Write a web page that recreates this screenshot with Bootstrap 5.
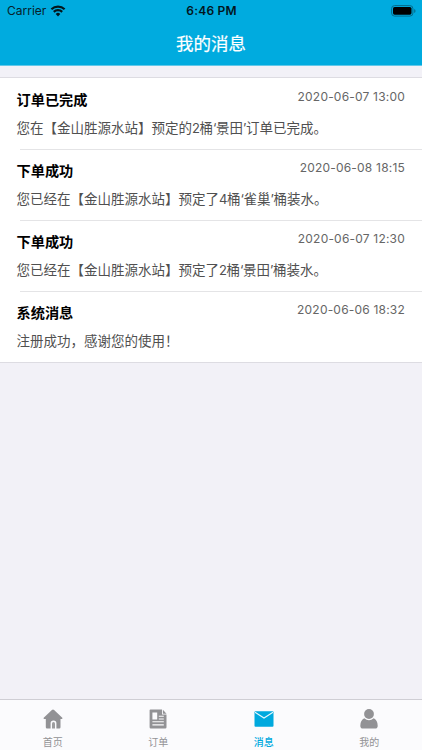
<!DOCTYPE html>
<html lang="zh-CN">
<head>
<meta charset="utf-8">
<meta name="viewport" content="width=device-width, initial-scale=1">
<title>我的消息</title>
<link href="https://cdn.jsdelivr.net/npm/bootstrap@5.3.0/dist/css/bootstrap.min.css" rel="stylesheet">
<style>
body{background:#f2f1f7;font-family:Inter,"Noto Sans CJK SC",sans-serif;height:100vh;overflow:hidden}
.app-header{background:#00abdf;height:66px;border-bottom:1px solid #62c8e9}
.status-bar{height:22px;font-size:12px;line-height:22px;color:#07212b;padding:0 6px 0 7px;letter-spacing:0}
.status-time{font-size:12px;font-weight:600;letter-spacing:.2px;color:#03161d}
.app-title{font-size:17.5px;line-height:43px;font-weight:400;color:#fff;-webkit-text-stroke:.2px #fff}
.messages{margin-top:11px;border-top:1px solid #dddce2;border-bottom:1px solid #dddce2;background:#fff}
.message{height:71.2px;padding:11.4px 17px 0 16.5px;position:relative}
.message:first-child{height:70.5px;padding-top:10.6px}
.message + .message::before{content:"";position:absolute;left:20px;right:0;top:0;height:1px;background:#e4e4e6}
.message-title{font-size:14.2px;line-height:21px;font-weight:700;color:#000}
.message-date{font-size:12px;line-height:15px;color:#666;letter-spacing:.2px}
.message-text{font-size:13.5px;line-height:20px;color:#505050;margin-top:8px}
.latin{font-size:13px;letter-spacing:-.4px}
.tab-bar{height:51px;background:#fbfbfd;border-top:1px solid #cfced4}
.tab-item{color:#929295;font-size:10px;line-height:14px;padding-top:9px;text-decoration:none}
.tab-item.current{color:#00a9de;font-weight:500}
.tab-item svg{margin-bottom:6px}
</style>
</head>
<body class="d-flex flex-column">
<header class="app-header flex-shrink-0">
  <div class="status-bar row g-0 align-items-center">
    <div class="col d-flex align-items-center gap-1">Carrier
      <svg width="16" height="12" viewBox="0 0 15 12" fill="none" stroke="#03161d" stroke-width="2.2"><path d="M.9 4.200a9.500 9.500 0 0 1 13.200 0M3.300 6.900a6 6 0 0 1 8.400 0"/><path d="M7.500 11.400 5.200 8.900a3.300 3.300 0 0 1 4.600 0z" fill="#03161d" stroke="none"/></svg>
    </div>
    <div class="col-auto status-time">6:46 PM</div>
    <div class="col d-flex justify-content-end">
      <svg width="25" height="12" viewBox="0 0 25 12"><rect x=".6" y=".6" width="21.3" height="10.5" rx="3" fill="none" stroke="#046c8b"/><rect x="2" y="2" width="18.5" height="7.7" rx="1.6"/><path d="M23.2 4v4q1.3-.7 1.3-2t-1.3-2" fill="#046c8b"/></svg>
    </div>
  </div>
  <h1 class="app-title text-center mb-0">我的消息</h1>
</header>
<main class="flex-grow-1">
  <div class="messages">
    <article class="message"><div class="d-flex justify-content-between"><h2 class="message-title mb-0">订单已完成</h2><time class="message-date">2020-06-07 13:00</time></div><p class="message-text mb-0">您在【金山胜源水站】预定的<span class="latin">2</span>桶<span class="latin">‘</span>景田<span class="latin">’</span>订单已完成。</p></article>
    <article class="message"><div class="d-flex justify-content-between"><h2 class="message-title mb-0">下单成功</h2><time class="message-date">2020-06-08 18:15</time></div><p class="message-text mb-0">您已经在【金山胜源水站】预定了<span class="latin">4</span>桶<span class="latin">‘</span>雀巢<span class="latin">’</span>桶装水。</p></article>
    <article class="message"><div class="d-flex justify-content-between"><h2 class="message-title mb-0">下单成功</h2><time class="message-date">2020-06-07 12:30</time></div><p class="message-text mb-0">您已经在【金山胜源水站】预定了<span class="latin">2</span>桶<span class="latin">‘</span>景田<span class="latin">’</span>桶装水。</p></article>
    <article class="message"><div class="d-flex justify-content-between"><h2 class="message-title mb-0">系统消息</h2><time class="message-date">2020-06-06 18:32</time></div><p class="message-text mb-0">注册成功，感谢您的使用！</p></article>
  </div>
</main>
<nav class="tab-bar row g-0 flex-shrink-0">
  <a class="tab-item col d-flex flex-column align-items-center" href="#"><svg width="20" height="20" viewBox="0 0 20 20" fill="currentColor"><path d="M10 .4q.6 0 1.100.5l8.200 7.900q.7 1-.5 1.200H17.500v8.200q0 1.200-1.200 1.200H13.400v-5.200q0-2.800-2.900-2.800t-2.900 2.800v5.200H4q-1.200 0-1.200-1.200V10H1.200q-1.200-.2-.5-1.200L8.900.9Q9.400.4 10 .4z"/><path d="M9 19.400v-5q0-1.500 1.500-1.500t1.500 1.500v5z" opacity=".9"/></svg>首页</a>
  <a class="tab-item col d-flex flex-column align-items-center" href="#"><svg width="20" height="20" viewBox="0 0 20 20" fill="currentColor"><path fill-rule="evenodd" d="M2.500.5H14v5h4.500V18.300q0 1.200-1.200 1.200H2.800q-1.200 0-1.200-1.200V1.300q0-.8.9-.8zM4.400 3.500v7h4.800v-7zm6.400 3.300v1h5v-1zm0 2.700v1h5v-1zm-6.400 2.800v1h11.400v-1zm0 3v1.100h11.400v-1.100z"/><path d="M14.900.7 18.500 4.700H14.900z"/></svg>订单</a>
  <a class="tab-item current col d-flex flex-column align-items-center" href="#"><svg width="20" height="20" viewBox="0 0 20 20"><rect x=".5" y="2.300" width="19" height="15.400" rx="1" fill="currentColor"/><path d="m1 3.200 9 5.800 9-5.800" fill="none" stroke="#e6f7fc" stroke-width="1.100"/></svg>消息</a>
  <a class="tab-item col d-flex flex-column align-items-center" href="#"><svg width="20" height="20" viewBox="0 0 20 20" fill="currentColor"><circle cx="10" cy="5" r="4.900"/><path d="M5.200 9.300Q10 13 14.800 9.300q3.900 2.200 3.900 7.400 0 2.800-2.500 2.800H3.800q-2.500 0-2.500-2.800 0-5.200 3.900-7.400z"/></svg>我的</a>
</nav>
<script src="https://cdn.jsdelivr.net/npm/bootstrap@5.3.0/dist/js/bootstrap.bundle.min.js"></script>
</body>
</html>
